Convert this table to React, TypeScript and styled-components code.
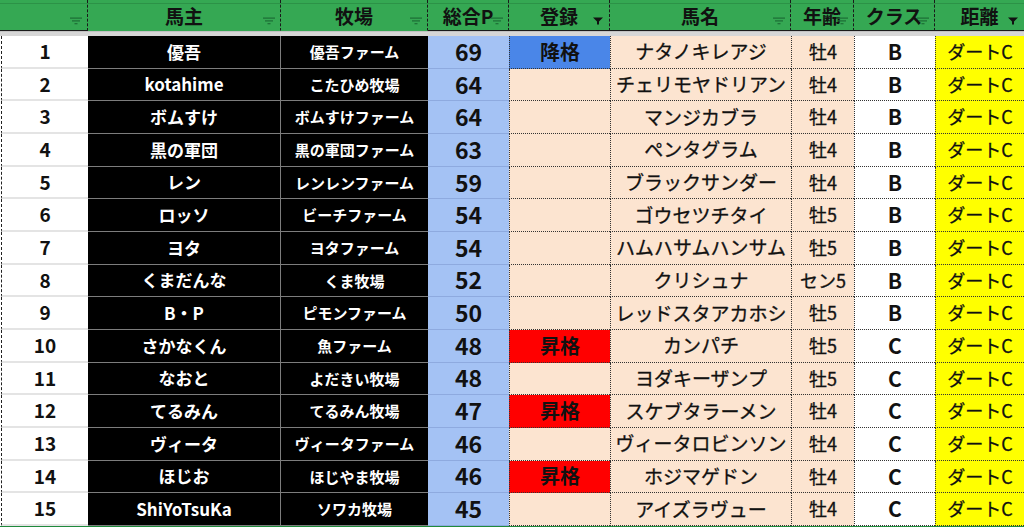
import React from "react";
import styled, { createGlobalStyle, css } from "styled-components";

const GlobalStyle = createGlobalStyle`
  html, body {
    margin: 0;
    padding: 0;
    background: #ffffff;
    overflow: hidden;
  }
  body {
    font-family: "Noto Sans CJK JP", "Noto Sans", sans-serif;
  }
`;

const COLS = "88px 193px 147px 81px 101px 181px 63px 81px 89px";
const ROW_H = "32.67px";

const Sheet = styled.div`
  width: 1024px;
  height: 527px;
  display: flex;
  flex-direction: column;
  border-bottom: 1px solid #1f8a3c;
  box-sizing: border-box;
`;

const HeaderRow = styled.div`
  display: grid;
  grid-template-columns: ${COLS};
  height: 31px;
  background: linear-gradient(#35a853 0 3px, #2c9247 3px 4px, #35a853 4px);
`;

const HeadCell = styled.div<{ $line?: boolean; $dash?: boolean }>`
  position: relative;
  display: flex;
  align-items: center;
  justify-content: center;
  font-size: 19px;
  font-weight: 700;
  color: #111;
  padding-top: 2px;
  line-height: 1.2;
  box-sizing: border-box;
  border-bottom: 1px solid ${(p) => (p.$line ? "#1a1a1a" : "transparent")};
  ${(p) =>
    p.$dash &&
    css`
      border-right: 1px dashed #1a1a1a;
    `}
`;

const FilterIcon = styled.svg`
  position: absolute;
  right: 5px;
  top: 17px;
  width: 12px;
  height: 8px;
`;

const Band = styled.div`
  height: 5px;
  background: #d6d6d6;
  border-top: 1px solid #c2c2c2;
  box-sizing: border-box;
`;

const Body = styled.div`
  display: grid;
  grid-template-columns: ${COLS};
  grid-auto-rows: ${ROW_H};
`;

type Kind = "idx" | "owner" | "ranch" | "pts" | "reg" | "name" | "age" | "cls" | "dist";

const plain = css`
  font-weight: 400;
  -webkit-text-stroke: 0.3px #111;
`;

const kindStyles: Record<Kind, ReturnType<typeof css>> = {
  idx: css`
    background: #ffffff;
    color: #111;
    font-size: 19px;
    font-weight: 700;
    border-bottom: 2px solid #e4e4e4;
    border-left: 1px dashed #222;
    margin-left: 1px;
  `,
  owner: css`
    background: #000000;
    color: #ffffff;
    font-size: 17px;
    font-weight: 700;
    border-bottom: 1px solid #7d7d7d;
    border-right: 1px solid #7d7d7d;
  `,
  ranch: css`
    background: #000000;
    color: #ffffff;
    font-size: 15px;
    font-weight: 700;
    border-bottom: 1px solid #7d7d7d;
  `,
  pts: css`
    background: #a4c2f4;
    color: #111;
    font-size: 23px;
    font-weight: 700;
    border-bottom: 1px solid #8eaadf;
  `,
  reg: css`
    color: #111;
    font-size: 20px;
    font-weight: 700;
    border-left: 1px dotted #333;
    border-bottom: 1px dotted #333;
  `,
  name: css`
    background: #fce4d0;
    color: #111;
    font-size: 19px;
    ${plain}
    border-left: 1px dotted #333;
    border-bottom: 1px dotted #333;
  `,
  age: css`
    background: #fce4d0;
    color: #111;
    font-size: 18px;
    ${plain}
    border-left: 1px dotted #333;
    border-bottom: 1px dotted #333;
  `,
  cls: css`
    background: #ffffff;
    color: #111;
    font-size: 21px;
    font-weight: 700;
    border-left: 1px dotted #333;
    border-bottom: 1px dotted #333;
  `,
  dist: css`
    background: #ffff00;
    color: #111;
    font-size: 18px;
    ${plain}
    border-left: 1px dotted #333;
    border-bottom: 1px dotted #333;
  `,
};

const Cell = styled.div<{ $kind: Kind; $bg?: string }>`
  display: flex;
  align-items: center;
  justify-content: center;
  white-space: nowrap;
  box-sizing: border-box;
  line-height: 1.3;
  ${(p) => kindStyles[p.$kind]}
  ${(p) =>
    p.$kind === "reg" &&
    css`
      background: ${p.$bg || "#fce4d0"};
    `}
`;

const Funnel = ({ active }: { active?: boolean }) =>
  active ? (
    <FilterIcon viewBox="0 0 12 8">
      <path d="M1 0.5 H11 L7 4.5 V7.5 H5 V4.5 Z" fill="#111" />
    </FilterIcon>
  ) : (
    <FilterIcon viewBox="0 0 12 8">
      <rect x="0" y="0.5" width="12" height="1.2" fill="#1d6d36" />
      <rect x="2" y="3.3" width="8" height="1.2" fill="#1d6d36" />
      <rect x="4.5" y="6.1" width="3" height="1.2" fill="#1d6d36" />
    </FilterIcon>
  );

const headers: { label: string; line: boolean; active?: boolean }[] = [
  { label: "", line: true },
  { label: "馬主", line: false },
  { label: "牧場", line: false },
  { label: "総合P", line: true },
  { label: "登録", line: true, active: true },
  { label: "馬名", line: true },
  { label: "年齢", line: true },
  { label: "クラス", line: true },
  { label: "距離", line: true, active: true },
];

type Row = [string, string, number, string, string, string, string];

const rows: Row[] = [
  ["優吾", "優吾ファーム", 69, "降格", "ナタノキレアジ", "牡4", "B"],
  ["kotahime", "こたひめ牧場", 64, "", "チェリモヤドリアン", "牡4", "B"],
  ["ボムすけ", "ボムすけファーム", 64, "", "マンジカブラ", "牡4", "B"],
  ["黒の軍団", "黒の軍団ファーム", 63, "", "ペンタグラム", "牡4", "B"],
  ["レン", "レンレンファーム", 59, "", "ブラックサンダー", "牡4", "B"],
  ["ロッソ", "ビーチファーム", 54, "", "ゴウセツチタイ", "牡5", "B"],
  ["ヨタ", "ヨタファーム", 54, "", "ハムハサムハンサム", "牡5", "B"],
  ["くまだんな", "くま牧場", 52, "", "クリシュナ", "セン5", "B"],
  ["B・P", "ピモンファーム", 50, "", "レッドスタアカホシ", "牡5", "B"],
  ["さかなくん", "魚ファーム", 48, "昇格", "カンパチ", "牡5", "C"],
  ["なおと", "よだきい牧場", 48, "", "ヨダキーザンプ", "牡5", "C"],
  ["てるみん", "てるみん牧場", 47, "昇格", "スケブタラーメン", "牡4", "C"],
  ["ヴィータ", "ヴィータファーム", 46, "", "ヴィータロビンソン", "牡4", "C"],
  ["ほじお", "ほじやま牧場", 46, "昇格", "ホジマゲドン", "牡4", "C"],
  ["ShiYoTsuKa", "ソワカ牧場", 45, "", "アイズラヴュー", "牡4", "C"],
];

const regColor = (r: string) =>
  r === "降格" ? "#4a86e8" : r === "昇格" ? "#ff0000" : undefined;

export default function App() {
  return (
    <>
      <GlobalStyle />
      <Sheet>
        <HeaderRow>
          {headers.map((h, i) => (
            <HeadCell key={i} $line={h.line} $dash={i < headers.length - 1}>
              {h.label}
              <Funnel active={h.active} />
            </HeadCell>
          ))}
        </HeaderRow>
        <Band />
        <Body>
          {rows.map((r, i) => (
            <React.Fragment key={i}>
              <Cell $kind="idx">{i + 1}</Cell>
              <Cell $kind="owner">{r[0]}</Cell>
              <Cell $kind="ranch">{r[1]}</Cell>
              <Cell $kind="pts">{r[2]}</Cell>
              <Cell $kind="reg" $bg={regColor(r[3])}>
                {r[3]}
              </Cell>
              <Cell $kind="name">{r[4]}</Cell>
              <Cell $kind="age">{r[5]}</Cell>
              <Cell $kind="cls">{r[6]}</Cell>
              <Cell $kind="dist">ダートC</Cell>
            </React.Fragment>
          ))}
        </Body>
      </Sheet>
    </>
  );
}
